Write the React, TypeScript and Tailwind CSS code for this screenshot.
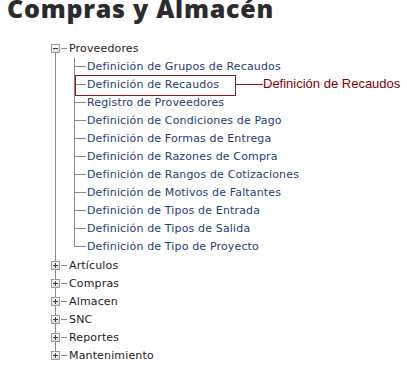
import React from "react";

const children = [
  "Definición de Grupos de Recaudos",
  "Definición de Recaudos",
  "Registro de Proveedores",
  "Definición de Condiciones de Pago",
  "Definición de Formas de Entrega",
  "Definición de Razones de Compra",
  "Definición de Rangos de Cotizaciones",
  "Definición de Motivos de Faltantes",
  "Definición de Tipos de Entrada",
  "Definición de Tipos de Salida",
  "Definición de Tipo de Proyecto",
];

const collapsed = ["Artículos", "Compras", "Almacen", "SNC", "Reportes", "Mantenimiento"];

function ToggleBox({ open }: { open: boolean }) {
  return (
    <div className="w-[9px] h-[9px] border border-[#9c9c9c] bg-gradient-to-b from-white to-[#dcdcdc] flex items-center justify-center shrink-0">
      <div className="relative w-[5px] h-[5px]">
        <div className="absolute left-0 top-[2px] w-[5px] h-px bg-[#3a3a3a]" />
        {!open && <div className="absolute left-[2px] top-0 w-px h-[5px] bg-[#3a3a3a]" />}
      </div>
    </div>
  );
}

function TopNode({
  label,
  open,
  first,
  last,
  children: kids,
}: {
  label: string;
  open: boolean;
  first?: boolean;
  last?: boolean;
  children?: React.ReactNode;
}) {
  return (
    <li className="flex">
      <div className="w-[9px] flex flex-col items-center shrink-0">
        <div className={`h-[4px] w-px shrink-0 ${first ? "" : "bg-[#8a8a8a]"}`} />
        <ToggleBox open={open} />
        <div className={`flex-1 w-px ${last ? "" : "bg-[#8a8a8a]"}`} />
      </div>
      <div className="flex flex-col">
        <div className="h-[18px] flex items-center">
          <div className="w-[6px] h-px bg-[#8a8a8a] ml-[1px] -mt-px" />
          <span className="ml-[2px] text-[11px] tracking-[0.15px] leading-[18px] text-[#1c1c1c]">{label}</span>
        </div>
        {kids}
      </div>
    </li>
  );
}

export default function App() {
  return (
    <div className="relative flex flex-col w-[407px] h-[370px] bg-white font-['DejaVu_Sans',sans-serif]">
      <h1 className="pl-[7px] pt-px pb-[16px] text-[25px] leading-[14px] font-extrabold text-[#2b2b2b] font-['Open_Sans',sans-serif] tracking-[0.75px]">
        Compras y Almacén
      </h1>
      <ul className="pl-[51px] pt-[9px]">
        <TopNode label="Proveedores" open first>
          <ul className="ml-[14px] mb-[1px]">
            {children.map((c, i) => {
              const last = i === children.length - 1;
              return (
                <li key={c} className="flex h-[18px]">
                  <div className="w-[12px] flex flex-col shrink-0">
                    <div className="h-[9px] border-l border-b border-[#8a8a8a]" />
                    <div className={`flex-1 ${last ? "" : "border-l border-[#8a8a8a]"}`} />
                  </div>
                  <span className="ml-[1px] text-[11px] tracking-[0.15px] leading-[18px] text-[#1f3d78] whitespace-nowrap">
                    {c}
                  </span>
                </li>
              );
            })}
          </ul>
        </TopNode>
        {collapsed.map((c, i) => (
          <TopNode key={c} label={c} open={false} last={i === collapsed.length - 1} />
        ))}
      </ul>

      {/* annotation */}
      <div className="absolute left-[75px] top-[75px] w-[161px] h-[21px] border border-[#8b1a1a]" />
      <div className="absolute left-[235px] top-[84px] w-[28px] h-px bg-[#8b1a1a]" />
      <span className="absolute left-[263px] top-[76px] text-[13px] leading-[16px] text-[#800000] font-['Liberation_Sans',sans-serif]">
        Definición de Recaudos
      </span>
    </div>
  );
}
